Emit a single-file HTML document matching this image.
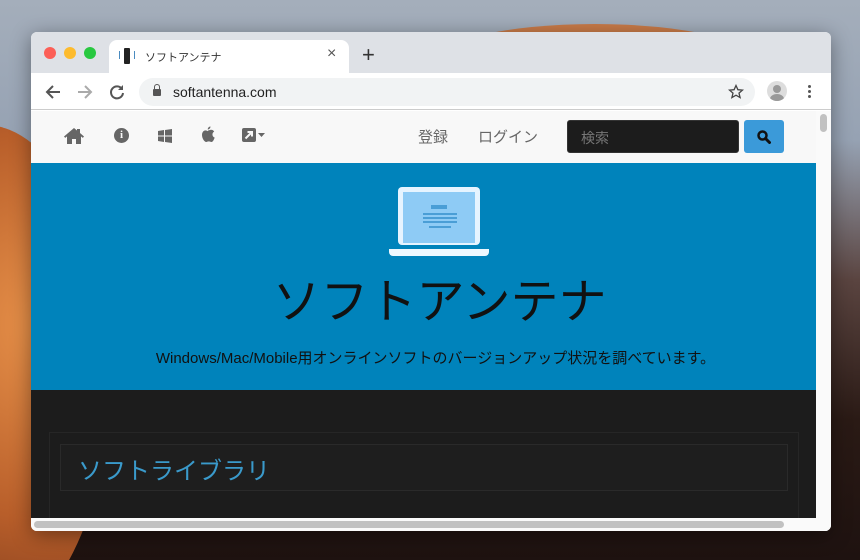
<!DOCTYPE html>
<html style="width:860px;height:560px;overflow:hidden;background:#2a1a15"><head><meta charset="utf-8"><style>
*{margin:0;padding:0;box-sizing:border-box}
body{width:860px;height:560px;overflow:hidden;position:relative;font-family:"Liberation Sans","Noto Sans CJK JP",sans-serif;
background:linear-gradient(180deg,#a4aebb 0%,#96a2b3 25%,#5a4440 50%,#2a1a15 75%,#1e1210 100%)}
.dune{position:absolute;border-radius:50%}
.win{position:absolute;left:31px;top:32px;width:800px;height:499px;background:#fff;border-radius:6px;overflow:hidden;box-shadow:0 4px 20px rgba(0,0,0,.4)}
.tabs{position:absolute;left:0;top:0;width:800px;height:41px;background:#dee1e6}
.dot{position:absolute;top:15px;width:12px;height:12px;border-radius:50%}
.tab{position:absolute;left:78px;top:8px;width:240px;height:33px;background:#fff;border-radius:8px 8px 0 0}
.tb{position:absolute;left:0;top:41px;width:800px;height:37px;background:#fff;border-bottom:1px solid #ccc}
.url{position:absolute;left:108px;top:5px;width:616px;height:28px;background:#f1f3f4;border-radius:14px}
.nav{position:absolute;left:0;top:79px;width:785px;height:52px;background:#f8f8f8}
.hero{position:absolute;left:0;top:131px;width:785px;height:227px;background:#0083bb;text-align:center}
.dark{position:absolute;left:0;top:358px;width:785px;height:128px;background:#1c1c1c}
svg{position:absolute}
</style></head><body>
<div style="position:absolute;left:0;top:0;width:860px;height:560px;overflow:hidden">
<div class="dune" style="left:-140px;top:125px;width:250px;height:500px;background:radial-gradient(circle at 75% 40%,#e8924a,#b85e2a 55%,#6a3018);"></div>
<div class="dune" style="left:430px;top:24px;width:330px;height:80px;background:#c87a48"></div>
</div>
<div class="win">
 <div class="tabs">
  <div class="dot" style="left:13px;background:#fc5f57"></div>
  <div class="dot" style="left:33px;background:#fdbb2e"></div>
  <div class="dot" style="left:53px;background:#28c840"></div>
  <div class="tab">
   <div style="position:absolute;left:15px;top:8px;width:6px;height:16px;background:#222;border-radius:1px"></div>
   <div style="position:absolute;left:10px;top:11px;width:16px;height:8px;border-left:1px solid #4a8bc0;border-right:1px solid #4a8bc0"></div>
   <div style="position:absolute;left:36px;top:9px;font-size:11px;color:#333">ソフトアンテナ</div>
   <div style="position:absolute;left:218px;top:5px;font-size:16px;color:#555">×</div>
  </div>
  <div style="position:absolute;left:331px;top:10px;font-size:22px;color:#333">+</div>
 </div>
 <div class="tb">
  <svg style="left:13px;top:10px" width="18" height="18" viewBox="0 0 18 18"><path d="M16 9H3M9 3L3 9l6 6" fill="none" stroke="#555" stroke-width="2"/></svg>
  <svg style="left:45px;top:10px" width="18" height="18" viewBox="0 0 18 18"><path d="M2 9h13M9 3l6 6-6 6" fill="none" stroke="#aaa" stroke-width="2"/></svg>
  <svg style="left:77px;top:10px" width="18" height="18" viewBox="0 0 18 18"><path d="M14 6A6 6 0 1 0 15 10" fill="none" stroke="#555" stroke-width="2"/><path d="M15 2v5h-5z" fill="#555"/></svg>
  <div class="url">
   <div style="position:absolute;left:14px;top:11px;width:8px;height:7px;background:#555;border-radius:1px"></div>
   <div style="position:absolute;left:15px;top:6px;width:6px;height:7px;border:1.5px solid #555;border-bottom:none;border-radius:3px 3px 0 0"></div>
   <div style="position:absolute;left:34px;top:6px;font-size:14px;color:#222">softantenna.com</div>
   <svg style="left:589px;top:6px" width="16" height="16" viewBox="0 0 16 16"><path d="M8 1.5l1.9 4.2 4.6.4-3.5 3 1.1 4.5L8 11.2 3.9 13.6 5 9.1 1.5 6.1l4.6-.4z" fill="none" stroke="#444" stroke-width="1.3"/></svg>
  </div>
  <div style="position:absolute;left:736px;top:8px;width:20px;height:20px;border-radius:50%;background:#ddd;overflow:hidden"><div style="position:absolute;left:6px;top:4px;width:8px;height:8px;border-radius:50%;background:#999"></div><div style="position:absolute;left:3px;top:13px;width:14px;height:10px;border-radius:50%;background:#999"></div></div>
  <div style="position:absolute;left:777px;top:12px;width:3px;height:3px;border-radius:50%;background:#555;box-shadow:0 5px 0 #555,0 10px 0 #555"></div>
 </div>
 <div class="nav">
  <svg style="left:32px;top:16px" width="22" height="18" viewBox="0 0 22 18"><path d="M11 1L1 9.5l1.2 1.4L4 9.4V17h5v-5h4v5h5V9.4l1.8 1.5L21 9.5 17 6V2h-3v1.5z" fill="#666"/></svg>
  <div style="position:absolute;left:83px;top:17px;width:15px;height:15px;border-radius:50%;background:#666;color:#f8f8f8;font-size:11px;font-weight:bold;text-align:center;line-height:15px;font-family:'Liberation Serif',serif">i</div>
  <svg style="left:127px;top:18px" width="14" height="14" viewBox="0 0 14 14"><path d="M0 2l6-1v5.5H0zM7 1l7-1v6.5H7zM0 7.5h6V13l-6-1zM7 7.5h7V14l-7-1z" fill="#666"/></svg>
  <svg style="left:170px;top:15px" width="14" height="17" viewBox="0 0 14 17"><path d="M9.5 0.5c0 1.6-1.3 3-2.8 3 0-1.6 1.3-3 2.8-3zM7 4.5c1 0 2-.7 3-.7 1.5 0 2.6.8 3.2 1.8-2.6 1.4-2.2 5 .5 6-.6 1.7-1.8 4.4-3.3 4.4-1 0-1.4-.6-2.6-.6s-1.7.6-2.6.6C3.6 16 1 12.5 1 9c0-3 1.9-4.6 3.6-4.6 1 0 1.8.7 2.4.7z" fill="#666"/></svg>
  <svg style="left:211px;top:17px" width="24" height="14" viewBox="0 0 24 14"><rect width="14" height="14" rx="2" fill="#666"/><path d="M3.5 10.5l6-6M5.5 4h4.5v4.5" fill="none" stroke="#f8f8f8" stroke-width="2"/><path d="M16 5h7l-3.5 4z" fill="#666"/></svg>
  <div style="position:absolute;left:387px;top:15px;font-size:15px;color:#666">登録</div>
  <div style="position:absolute;left:447px;top:15px;font-size:15px;color:#666">ログイン</div>
  <div style="position:absolute;left:536px;top:9px;width:172px;height:33px;background:#1c1c1c;border-radius:3px;border:1px solid #333"><span style="position:absolute;left:13px;top:7px;font-size:14px;color:#777">検索</span></div>
  <div style="position:absolute;left:713px;top:9px;width:40px;height:33px;background:#3b9ad9;border-radius:3px">
   <svg style="left:13px;top:10px" width="14" height="14" viewBox="0 0 14 14"><circle cx="5.5" cy="5.5" r="4" fill="none" stroke="#111" stroke-width="2.5"/><path d="M8.5 8.5l4 4" stroke="#111" stroke-width="3" stroke-linecap="round"/></svg>
  </div>
 </div>
 <div class="hero">
  <div style="position:absolute;left:367px;top:24px;width:82px;height:58px;background:#e6f4ff;border-radius:4px"></div>
  <div style="position:absolute;left:372px;top:29px;width:72px;height:51px;background:#8ecbf5"></div>
  <div style="position:absolute;left:400px;top:42px;width:16px;height:4px;background:#4a9ed6"></div>
  <div style="position:absolute;left:392px;top:50px;width:34px;height:2px;background:#4a9ed6;box-shadow:0 4px 0 #4a9ed6,0 8px 0 #4a9ed6"></div>
  <div style="position:absolute;left:398px;top:63px;width:22px;height:2px;background:#4a9ed6"></div>
  <div style="position:absolute;left:358px;top:86px;width:100px;height:7px;background:#eef8ff;border-radius:0 0 4px 4px"></div>
  <div style="position:absolute;left:16px;top:110px;width:785px;font-size:48px;color:#111;line-height:60px">ソフトアンテナ</div>
  <div style="position:absolute;left:12px;top:184px;width:785px;font-size:15px;color:#111">Windows/Mac/Mobile用オンラインソフトのバージョンアップ状況を調べています。</div>
 </div>
 <div class="dark">
  <div style="position:absolute;left:18px;top:42px;width:750px;height:100px;border:1px solid #262626"></div>
  <div style="position:absolute;left:29px;top:54px;width:728px;height:47px;border:1px solid #2a2a2a;background:#1e1e1e"><span style="position:absolute;left:17px;top:6px;font-size:24px;color:#3a9acb">ソフトライブラリ</span></div>
 </div>
 <div style="position:absolute;left:785px;top:79px;width:15px;height:420px;background:#fafafa"><div style="position:absolute;left:4px;top:3px;width:7px;height:18px;border-radius:4px;background:#c1c1c1"></div></div>
 <div style="position:absolute;left:0;top:486px;width:800px;height:13px;background:#fafafa"><div style="position:absolute;left:3px;top:3px;width:750px;height:7px;border-radius:4px;background:#c1c1c1"></div></div>
</div>
</body></html>
